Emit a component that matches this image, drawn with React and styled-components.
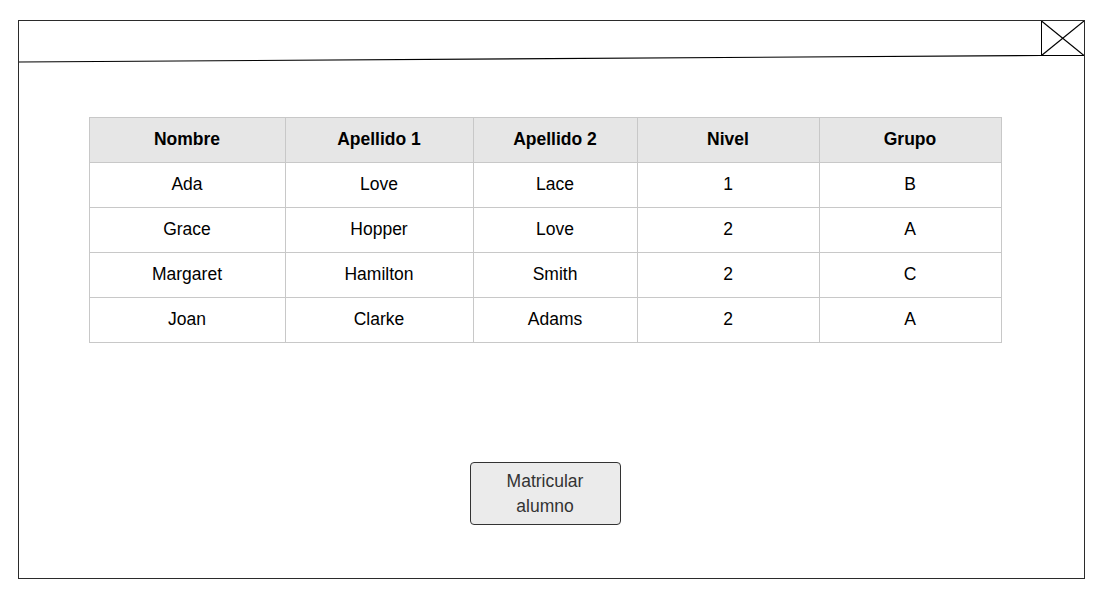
import styled, { createGlobalStyle } from "styled-components";

const GlobalStyle = createGlobalStyle`
  body {
    margin: 0;
    background: #ffffff;
    font-family: "Liberation Sans", Arial, sans-serif;
  }
`;

const Page = styled.div`
  padding: 20px 0 0 18px;
`;

const Window = styled.div`
  box-sizing: border-box;
  width: 1067px;
  height: 559px;
  border: 1px solid #2b2b2b;
  display: flex;
  flex-direction: column;
`;

const TitleBar = styled.svg`
  display: block;
  width: 1065px;
  height: 42px;
  flex-shrink: 0;
`;

const Content = styled.div`
  padding: 54px 0 0 70px;
  width: 912px;
  display: flex;
  flex-direction: column;
  align-items: center;
`;

const Table = styled.table`
  width: 912px;
  border-collapse: collapse;
  table-layout: fixed;
  font-size: 17.5px;
  color: #000;
`;

const HeadCell = styled.th`
  height: 45px;
  box-sizing: border-box;
  padding: 0 0 2px;
  background: #e6e6e6;
  border: 1px solid #c8c8c8;
  font-weight: bold;
  text-align: center;
`;

const Cell = styled.td`
  height: 45px;
  box-sizing: border-box;
  padding: 0 0 2px;
  border: 1px solid #c8c8c8;
  text-align: center;
`;

const Button = styled.button`
  margin-top: 119px;
  width: 151px;
  height: 63px;
  box-sizing: border-box;
  background: #ebebeb;
  border: 1px solid #333;
  border-radius: 4px;
  font-family: "Liberation Sans", Arial, sans-serif;
  font-size: 17.5px;
  line-height: 25px;
  color: #333;
  padding: 0 16px;
`;

const columns = [
  { label: "Nombre", width: 196 },
  { label: "Apellido 1", width: 188 },
  { label: "Apellido 2", width: 164 },
  { label: "Nivel", width: 182 },
  { label: "Grupo", width: 182 },
];

const alumnos = [
  ["Ada", "Love", "Lace", "1", "B"],
  ["Grace", "Hopper", "Love", "2", "A"],
  ["Margaret", "Hamilton", "Smith", "2", "C"],
  ["Joan", "Clarke", "Adams", "2", "A"],
];

const App = () => {
  return (
    <Page>
      <GlobalStyle />
      <Window>
        <TitleBar viewBox="0 0 1065 42">
          <line x1="0" y1="41" x2="1022" y2="34.5" stroke="#000" strokeWidth="1.2" />
          <line x1="1022.5" y1="0" x2="1022.5" y2="34.5" stroke="#000" strokeWidth="1" />
          <line x1="1022" y1="34.5" x2="1065" y2="34.5" stroke="#000" strokeWidth="1" />
          <line x1="1022.5" y1="0" x2="1065" y2="34.5" stroke="#000" strokeWidth="1.2" />
          <line x1="1022.5" y1="34.5" x2="1065" y2="0" stroke="#000" strokeWidth="1.2" />
        </TitleBar>
        <Content>
          <Table>
            <colgroup>
              {columns.map(c => (<col key={c.label} style={{ width: c.width }} />))}
            </colgroup>
            <thead>
              <tr>
                {columns.map(c => (<HeadCell key={c.label}>{c.label}</HeadCell>))}
              </tr>
            </thead>
            <tbody>
              {alumnos.map(row => (
                <tr key={row[0]}>
                  {row.map((v, i) => (<Cell key={i}>{v}</Cell>))}
                </tr>
              ))}
            </tbody>
          </Table>
          <Button>Matricular alumno</Button>
        </Content>
      </Window>
    </Page>
  );
};

export default App;
